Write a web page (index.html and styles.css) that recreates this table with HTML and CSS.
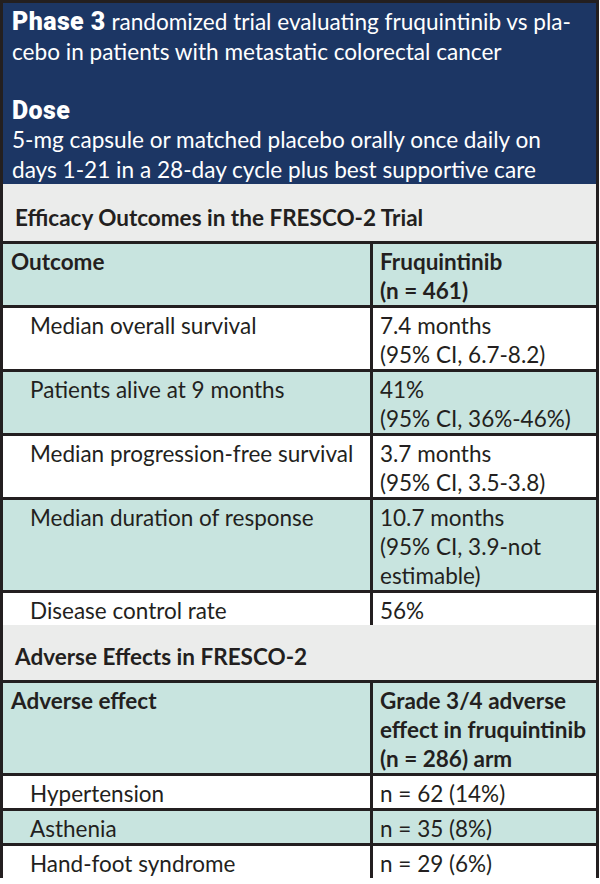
FILE: index.html
```html
<!DOCTYPE html>
<html lang="en">
<head>
<meta charset="utf-8">
<title>FRESCO-2 Trial</title>
<link rel="stylesheet" href="styles.css">
</head>
<body>
<div class="card">
  <div class="intro">
    <p class="intro-p"><span class="heavy">Phase 3</span> randomized trial evaluating fruquintinib vs pla-<br>cebo in patients with metastatic colorectal cancer</p>
    <p class="intro-p gap"><span class="heavy">Dose</span><br>5-mg capsule or matched placebo orally once daily on<br>days 1-21 in a 28-day cycle plus best supportive care</p>
  </div>
  <div class="section-title">Efficacy Outcomes in the FRESCO-2 Trial</div>
  <table class="data">
    <tr class="head teal">
      <th class="c1">Outcome</th>
      <th class="c2">Fruquintinib<br>(n = 461)</th>
    </tr>
    <tr class="white">
      <td class="c1 ind">Median overall survival</td>
      <td class="c2">7.4 months<br>(95% CI, 6.7-8.2)</td>
    </tr>
    <tr class="teal">
      <td class="c1 ind">Patients alive at 9 months</td>
      <td class="c2">41%<br>(95% CI, 36%-46%)</td>
    </tr>
    <tr class="white">
      <td class="c1 ind">Median progression-free survival</td>
      <td class="c2">3.7 months<br>(95% CI, 3.5-3.8)</td>
    </tr>
    <tr class="teal">
      <td class="c1 ind">Median duration of response</td>
      <td class="c2">10.7 months<br>(95% CI, 3.9-not<br>estimable)</td>
    </tr>
    <tr class="white">
      <td class="c1 ind">Disease control rate</td>
      <td class="c2">56%</td>
    </tr>
  </table>
  <div class="section-title second">Adverse Effects in FRESCO-2</div>
  <table class="data">
    <tr class="head teal">
      <th class="c1">Adverse effect</th>
      <th class="c2">Grade 3/4 adverse<br>effect in fruquintinib<br>(n = 286) arm</th>
    </tr>
    <tr class="white">
      <td class="c1 ind">Hypertension</td>
      <td class="c2">n = 62 (14%)</td>
    </tr>
    <tr class="teal">
      <td class="c1 ind">Asthenia</td>
      <td class="c2">n = 35 (8%)</td>
    </tr>
    <tr class="white">
      <td class="c1 ind">Hand-foot syndrome</td>
      <td class="c2">n = 29 (6%)</td>
    </tr>
  </table>
</div>
</body>
</html>
```

FILE: styles.css
```css
html, body {
  margin: 0;
  padding: 0;
  background: #ffffff;
}

body {
  font-family: Lato, "Open Sans", "Liberation Sans", sans-serif;
  color: #231f20;
}

.card {
  width: 599px;
  box-sizing: border-box;
  border: 3px solid #231f20;
  border-bottom: none;
  background: #ffffff;
}

.intro {
  background: #1c3664;
  color: #ffffff;
  padding: 4px 4px 0 9px;
  height: 181px;
  box-sizing: border-box;
  font-size: 22.6px;
  line-height: 29.5px;
  white-space: nowrap;
}

.intro-p {
  margin: 0;
}

.intro-p.gap {
  margin-top: 29.5px;
}

.heavy {
  font-family: Roboto, "Liberation Sans", sans-serif;
  font-weight: 900;
  font-size: 25px;
  letter-spacing: 0.4px;
}

.section-title {
  background: #ebeceb;
  font-weight: 700;
  font-size: 22.5px;
  line-height: 29px;
  padding: 19px 12px 9px 12px;
  border-bottom: 3px solid #231f20;
}

.section-title.second {
  padding-top: 17px;
}

.data {
  width: 100%;
  border-collapse: collapse;
  table-layout: fixed;
  font-size: 22.5px;
  line-height: 29px;
}

.data tr {
  border-bottom: 3px solid #231f20;
}

.data tr:last-child {
  border-bottom: none;
}

.data th,
.data td {
  text-align: left;
  vertical-align: top;
  padding: 3px 2px 0 8px;
  white-space: nowrap;
}

.data th {
  font-weight: 700;
}

.data .c1 {
  width: 357px;
  border-right: 3px solid #231f20;
}

.data .c1.ind {
  padding-left: 27px;
}

.data .c2 {
  padding-left: 7px;
}

.teal {
  background: #c8e4df;
}

.white {
  background: #ffffff;
}
```
